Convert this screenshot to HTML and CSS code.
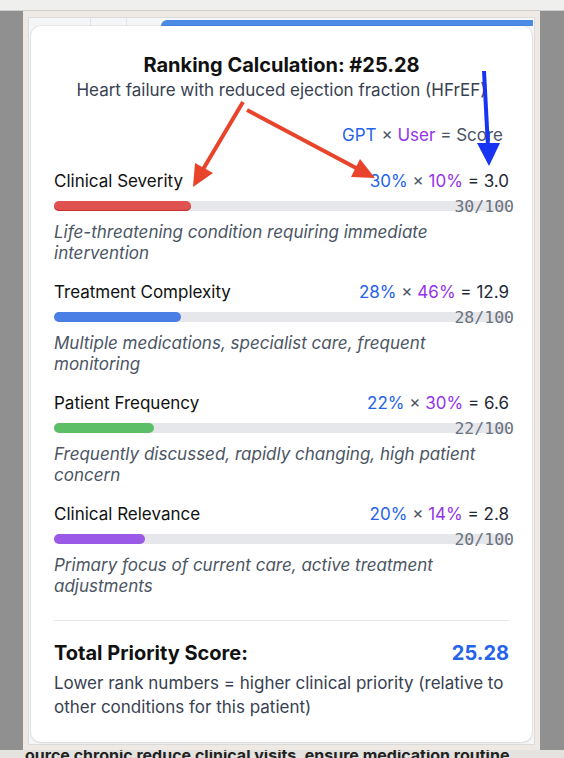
FILE: index.html
```html
<!DOCTYPE html>
<html>
<head>
<meta charset="utf-8">
<link rel="stylesheet" href="styles.css">
</head>
<body>
<div class="screen">
  <div class="topstrip"></div>
  <div class="stage">
    <div class="side"></div>
    <div class="frame">
      <div class="panel">
        <div class="tabbar">
          <div class="tab tab1"></div>
          <div class="tab tab2"></div>
          <div class="tabgap"></div>
          <div class="tabactive"></div>
        </div>
        <div class="card">
          <h1 class="title">Ranking Calculation: #25.28</h1>
          <p class="subtitle">Heart failure with reduced ejection fraction (HFrEF)</p>
          <div class="legend"><span class="gpt">GPT</span> × <span class="user">User</span> = Score</div>

          <div class="factor">
            <div class="factor-head">
              <span class="factor-name">Clinical Severity</span>
              <span class="calc"><span class="gpt">30%</span> <span class="op">×</span> <span class="user">10%</span> = 3.0</span>
            </div>
            <div class="track"><div class="fill red" style="width:30%"></div><span class="ratio">30/100</span></div>
            <p class="desc">Life-threatening condition requiring immediate intervention</p>
          </div>

          <div class="factor">
            <div class="factor-head">
              <span class="factor-name">Treatment Complexity</span>
              <span class="calc"><span class="gpt">28%</span> <span class="op">×</span> <span class="user">46%</span> = 12.9</span>
            </div>
            <div class="track"><div class="fill blue" style="width:28%"></div><span class="ratio">28/100</span></div>
            <p class="desc">Multiple medications, specialist care, frequent monitoring</p>
          </div>

          <div class="factor">
            <div class="factor-head">
              <span class="factor-name">Patient Frequency</span>
              <span class="calc"><span class="gpt">22%</span> <span class="op">×</span> <span class="user">30%</span> = 6.6</span>
            </div>
            <div class="track"><div class="fill green" style="width:22%"></div><span class="ratio">22/100</span></div>
            <p class="desc">Frequently discussed, rapidly changing, high patient concern</p>
          </div>

          <div class="factor">
            <div class="factor-head">
              <span class="factor-name">Clinical Relevance</span>
              <span class="calc"><span class="gpt">20%</span> <span class="op">×</span> <span class="user">14%</span> = 2.8</span>
            </div>
            <div class="track"><div class="fill purple" style="width:20%"></div><span class="ratio">20/100</span></div>
            <p class="desc">Primary focus of current care, active treatment adjustments</p>
          </div>

          <div class="divider"></div>
          <div class="total">
            <span>Total Priority Score:</span>
            <span class="total-value">25.28</span>
          </div>
          <p class="note">Lower rank numbers = higher clinical priority (relative to other conditions for this patient)</p>
        </div>
      </div>
    </div>
    <div class="side"></div>
  </div>
  <div class="bottomstrip"><span class="cut">ource chronic reduce clinical visits, ensure medication routine</span></div>

  <svg class="annotations" width="564" height="758" viewBox="0 0 564 758">
    <g stroke="#e8432b" stroke-width="4" stroke-linecap="butt" fill="#e8432b">
      <line x1="243" y1="102" x2="202" y2="171"/>
      <polygon points="193,187 195,163 213,173" stroke="none"/>
      <line x1="247" y1="110" x2="358" y2="169"/>
      <polygon points="375,178 351,177 360,159" stroke="none"/>
    </g>
    <g stroke="#1634f2" stroke-width="4" fill="#1634f2">
      <line x1="484" y1="71" x2="488" y2="147"/>
      <polygon points="489,166 477,143 500,143" stroke="none"/>
    </g>
  </svg>
</div>
</body>
</html>
```

FILE: styles.css
```css
* { box-sizing: border-box; }
html, body { margin: 0; padding: 0; }
body {
  width: 564px;
  height: 758px;
  overflow: hidden;
  background: #8f8f8f;
  font-family: Inter, "Noto Sans", "Liberation Sans", sans-serif;
}
.screen {
  position: relative;
  width: 564px;
  height: 758px;
}
.topstrip {
  height: 11px;
  background: #efefed;
  border-bottom: 1px solid #cfcfcd;
}
.stage {
  display: flex;
  height: 739px;
}
.side {
  width: 23px;
  background: #909090;
}
.side:last-child { width: 24px; }
.frame {
  flex: 1;
  background: #eee9e4;
  padding: 6px 5px 5px 5px;
}
.panel {
  height: 728px;
  border: 1px solid #dcdcdc;
  background: #f5f6f8;
  padding: 0 2px 2px 2px;
  display: flex;
  flex-direction: column;
}
.tabbar {
  display: flex;
  height: 8px;
  margin: 0 -2px;
}
.tab { border-right: 1px solid #e1e3e7; }
.tab1 { width: 62px; }
.tab2 { width: 36px; }
.tabgap { width: 34px; }
.tabactive {
  flex: 1;
  margin: 2px 1px 0 0;
  background: #4b8ae6;
  border-radius: 6px 0 0 0;
}
.card {
  flex: 1;
  background: #ffffff;
  border-radius: 10px;
  box-shadow: 0 0 0 1px rgba(0,0,0,0.05), 0 1px 3px rgba(0,0,0,0.08);
  padding: 26px 23px 23px 23px;
  color: #111827;
}
.title {
  margin: 0;
  font-size: 20px;
  line-height: 26px;
  font-weight: 700;
  text-align: center;
  color: #111111;
}
.subtitle {
  margin: 0;
  font-size: 17px;
  line-height: 24px;
  text-align: center;
  color: #374151;
}
.legend {
  margin-top: 21px;
  font-size: 17px;
  line-height: 24px;
  text-align: right;
  padding-right: 6px;
  color: #4b5563;
}
.gpt { color: #2563eb; }
.user { color: #9333ea; }
.factor { margin-top: 16px; }
.legend + .factor { margin-top: 22px; }
.factor-head {
  display: flex;
  justify-content: space-between;
  font-size: 17px;
  line-height: 24px;
}
.factor-name { color: #111111; }
.calc { color: #1f2937; }
.op { color: #4b5563; }
.track {
  position: relative;
  margin-top: 8px;
  height: 10px;
  border-radius: 5px;
  background: #e5e7eb;
}
.fill {
  height: 10px;
  border-radius: 5px;
}
.red { background: #df5250; box-shadow: inset 0 -1px 0 #c8302c; }
.blue { background: #4a80e6; }
.green { background: #5cbf68; }
.purple { background: #9b59e8; }
.ratio {
  position: absolute;
  right: -5px;
  top: -2px;
  font-family: "DejaVu Sans Mono", "Liberation Mono", monospace;
  font-size: 16.5px;
  line-height: 16px;
  color: #6b7280;
}
.desc {
  margin: 11px 0 0 0;
  font-size: 17px;
  line-height: 21px;
  font-style: italic;
  color: #4b5563;
}
.divider {
  margin-top: 23px;
  height: 1px;
  background: #e5e7eb;
}
.total {
  margin-top: 19px;
  display: flex;
  justify-content: space-between;
  font-size: 20px;
  line-height: 26px;
  font-weight: 700;
  color: #111111;
}
.total-value { color: #2563eb; }
.note {
  margin: 5px 0 0 0;
  font-size: 17px;
  line-height: 24px;
  color: #374151;
}
.bottomstrip {
  height: 8px;
  overflow: hidden;
  background: #e4e3df;
  padding-left: 25px;
  white-space: nowrap;
}
.cut {
  display: block;
  margin-top: -3px;
  font-size: 16px;
  line-height: 16px;
  font-weight: 700;
  color: #222222;
}
.annotations {
  position: absolute;
  left: 0;
  top: 0;
  pointer-events: none;
}
```
